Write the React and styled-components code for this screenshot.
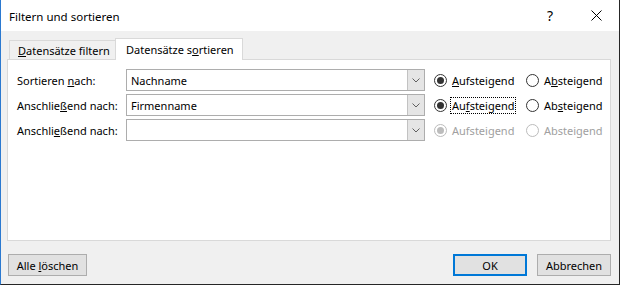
import React from "react";
import styled, { createGlobalStyle } from "styled-components";

const GlobalStyle = createGlobalStyle`
  html, body { margin: 0; padding: 0; background: #ffffff; }
  body { font-family: "Noto Sans", "Open Sans", sans-serif; font-size: 11px; color: #000; }
  * { box-sizing: border-box; }
`;

const Window = styled.div`
  width: 620px;
  height: 285px;
  display: flex;
  flex-direction: column;
  border-left: 1px solid #2b79d0;
  border-right: 1px solid #262626;
  border-bottom: 1px solid #262626;
  background: #f0f0f0;
  white-space: nowrap;
`;

const TitleBar = styled.div`
  height: 31px;
  display: flex;
  align-items: center;
  background: #ffffff;
  padding-left: 8px;
`;

const Title = styled.div`
  flex: 1;
  font-size: 11.5px;
  padding-top: 1px;
`;

const CaptionButton = styled.div`
  width: 46px;
  height: 31px;
  display: flex;
  align-items: center;
  justify-content: center;
  font-size: 14px;
  color: #000;
`;

const Body = styled.div`
  flex: 1;
  display: flex;
  flex-direction: column;
  padding: 7px 8px 0 6px;
`;

const TabStrip = styled.div`
  display: flex;
  align-items: flex-end;
  height: 21px;
  padding-left: 2px;
  position: relative;
  z-index: 1;
`;

const Tab = styled.div`
  width: ${p => p.$width}px;
  height: ${p => (p.$active ? 22 : 19)}px;
  margin-bottom: ${p => (p.$active ? -1 : 0)}px;
  padding-left: ${p => p.$pad}px;
  display: flex;
  align-items: center;
  background: ${p => (p.$active ? "#ffffff" : "#f0f0f0")};
  border: 1px solid #d9d9d9;
  border-bottom: none;
  border-right: ${p => (p.$active ? "1px solid #d9d9d9" : "none")};
`;

const Panel = styled.div`
  height: 182px;
  background: #ffffff;
  border: 1px solid #d9d9d9;
  padding: 9px 0 0 9px;
  display: flex;
  flex-direction: column;
  gap: 3px;
`;

const Row = styled.div`
  display: flex;
  align-items: center;
  height: 22px;
`;

const Label = styled.div`
  width: 109px;
`;

const Combo = styled.div`
  width: 299px;
  height: 22px;
  display: flex;
  border: 1px solid #adadad;
  background: #ffffff;
`;

const ComboText = styled.div`
  flex: 1;
  padding-left: 4px;
  display: flex;
  align-items: center;
`;

const DropButton = styled.div`
  width: 17px;
  display: flex;
  align-items: center;
  justify-content: center;
  background: #e5e5e5;
  border-left: 1px solid #c2c2c2;
`;

const RadioItem = styled.div`
  width: ${p => p.$width}px;
  margin-left: ${p => p.$offset || 0}px;
  display: flex;
  align-items: center;
  gap: 4px;
  color: ${p => (p.$disabled ? "#a0a0a0" : "#000")};
`;

const Circle = styled.span`
  width: 13px;
  height: 13px;
  border-radius: 50%;
  border: 1px solid ${p => (p.$disabled ? "#bcbcbc" : "#333333")};
  display: flex;
  align-items: center;
  justify-content: center;
  flex-shrink: 0;
  &::after {
    content: "";
    display: ${p => (p.$checked ? "block" : "none")};
    width: 7px;
    height: 7px;
    border-radius: 50%;
    background: ${p => (p.$disabled ? "#bcbcbc" : "#333333")};
  }
`;

const RadioText = styled.span`
  padding: 0 1px;
  line-height: 15px;
  outline: ${p => (p.$focus ? "1px dotted #000" : "none")};
`;

const Footer = styled.div`
  height: 43px;
  display: flex;
  align-items: flex-start;
  padding: 13px 0 0 1px;
  gap: 10px;
`;

const Button = styled.div`
  width: ${p => p.$width}px;
  height: 22px;
  display: flex;
  align-items: center;
  justify-content: center;
  background: #e1e1e1;
  border: ${p => (p.$default ? "2px solid #0078d7" : "1px solid #adadad")};
  margin-left: ${p => (p.$push ? "auto" : "0")};
`;

const Chevron = () => (
  <svg width="8" height="5" viewBox="0 0 8 5">
    <path d="M0.5 0.5 L4 4 L7.5 0.5" fill="none" stroke="#606060" strokeWidth="1" />
  </svg>
);

const CloseIcon = () => (
  <svg width="11" height="11" viewBox="0 0 11 11">
    <path d="M0.5 0.5 L10.5 10.5 M10.5 0.5 L0.5 10.5" stroke="#000" strokeWidth="1" />
  </svg>
);

const rows = [
  { label: <>Sortieren <u>n</u>ach:</>, value: "Nachname", asc: <><u>A</u>ufsteigend</>, desc: <>A<u>b</u>steigend</> },
  { label: <>Anschlie<u>ß</u>end nach:</>, value: "Firmenname", asc: <>Au<u>f</u>steigend</>, desc: <>Ab<u>s</u>teigend</>, focus: true },
  { label: <>Anschli<u>e</u>ßend nach:</>, value: "", asc: "Aufsteigend", desc: "Absteigend", disabled: true },
];

export default function App() {
  return (
    <>
      <GlobalStyle />
      <Window>
        <TitleBar>
          <Title>Filtern und sortieren</Title>
          <CaptionButton>?</CaptionButton>
          <CaptionButton><CloseIcon /></CaptionButton>
        </TitleBar>
        <Body>
          <TabStrip>
            <Tab $width={106} $pad={8}><span><u>D</u>atensätze filtern</span></Tab>
            <Tab $width={128} $pad={10} $active><span>Datensätze s<u>o</u>rtieren</span></Tab>
          </TabStrip>
          <Panel>
            {rows.map((r, i) => (
              <Row key={i}>
                <Label>{r.label}</Label>
                <Combo>
                  <ComboText>{r.value}</ComboText>
                  <DropButton><Chevron /></DropButton>
                </Combo>
                <RadioItem $width={92} $offset={9} $disabled={r.disabled}>
                  <Circle $checked $disabled={r.disabled} />
                  <RadioText $focus={r.focus}>{r.asc}</RadioText>
                </RadioItem>
                <RadioItem $width={80} $disabled={r.disabled}>
                  <Circle $disabled={r.disabled} />
                  <RadioText>{r.desc}</RadioText>
                </RadioItem>
              </Row>
            ))}
          </Panel>
          <Footer>
            <Button $width={79}><span>Alle <u>l</u>öschen</span></Button>
            <Button $width={74} $default $push>OK</Button>
            <Button $width={74}>Abbrechen</Button>
          </Footer>
        </Body>
      </Window>
    </>
  );
}
